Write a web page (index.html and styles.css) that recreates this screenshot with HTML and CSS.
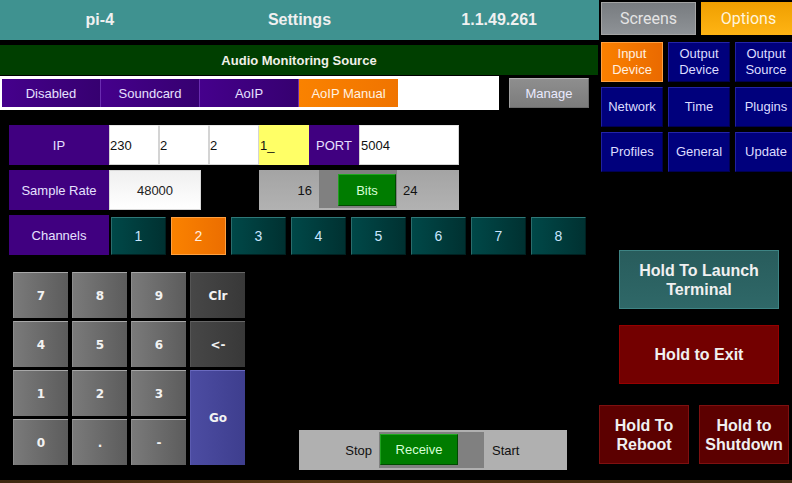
FILE: index.html
```html
<!DOCTYPE html>
<html>
<head>
<meta charset="utf-8">
<link rel="stylesheet" href="styles.css">
</head>
<body>
<div class="screen">
  <div class="left">
    <div class="header">
      <div>pi-4</div>
      <div>Settings</div>
      <div>1.1.49.261</div>
    </div>
    <div class="titlebar">Audio Monitoring Source</div>
    <div class="source-row">
      <div class="source-box">
        <div class="src">Disabled</div>
        <div class="src">Soundcard</div>
        <div class="src">AoIP</div>
        <div class="src src-on">AoIP Manual</div>
      </div>
      <div class="manage">Manage</div>
    </div>
    <div class="row row-ip">
      <div class="label">IP</div>
      <div class="field">230</div>
      <div class="field">2</div>
      <div class="field">2</div>
      <div class="field field-active">1_</div>
      <div class="label label-port">PORT</div>
      <div class="field field-port">5004</div>
    </div>
    <div class="row">
      <div class="label">Sample Rate</div>
      <div class="rate">48000</div>
      <div class="toggle bits">
        <div class="tg-left">16</div>
        <div class="track"><div class="knob">Bits</div></div>
        <div class="tg-right">24</div>
      </div>
    </div>
    <div class="row">
      <div class="label">Channels</div>
      <div class="channels">
        <div class="ch">1</div>
        <div class="ch ch-on">2</div>
        <div class="ch">3</div>
        <div class="ch">4</div>
        <div class="ch">5</div>
        <div class="ch">6</div>
        <div class="ch">7</div>
        <div class="ch">8</div>
      </div>
    </div>
    <div class="bottom">
      <div class="keypad">
        <div class="key">7</div>
        <div class="key">8</div>
        <div class="key">9</div>
        <div class="key key-dark">Clr</div>
        <div class="key">4</div>
        <div class="key">5</div>
        <div class="key">6</div>
        <div class="key key-dark">&lt;-</div>
        <div class="key">1</div>
        <div class="key">2</div>
        <div class="key">3</div>
        <div class="key key-go">Go</div>
        <div class="key">0</div>
        <div class="key">.</div>
        <div class="key">-</div>
      </div>
      <div class="toggle receive">
        <div class="tg-left">Stop</div>
        <div class="track"><div class="knob">Receive</div></div>
        <div class="tg-right">Start</div>
      </div>
    </div>
  </div>
  <div class="right">
    <div class="tabs">
      <div class="tab tab-screens">Screens</div>
      <div class="tab tab-options">Options</div>
    </div>
    <div class="menu">
      <div class="mi mi-on">Input<br>Device</div>
      <div class="mi">Output<br>Device</div>
      <div class="mi">Output<br>Source</div>
      <div class="mi">Network</div>
      <div class="mi">Time</div>
      <div class="mi">Plugins</div>
      <div class="mi">Profiles</div>
      <div class="mi">General</div>
      <div class="mi">Update</div>
    </div>
    <div class="hold hold-term">Hold To Launch<br>Terminal</div>
    <div class="hold hold-exit">Hold to Exit</div>
    <div class="hold-row">
      <div class="hold hold-small">Hold To<br>Reboot</div>
      <div class="hold hold-small hold-shut">Hold to<br>Shutdown</div>
    </div>
  </div>
</div>
<div class="wood"></div>
</body>
</html>
```

FILE: styles.css
```css
* { box-sizing: border-box; }
html, body {
  margin: 0;
  padding: 0;
  background: #000;
  width: 792px;
  height: 483px;
  overflow: hidden;
  font-family: "Liberation Sans", Arial, sans-serif;
  font-size: 13px;
}
.screen {
  display: flex;
  height: 480px;
  overflow: hidden;
}
.left {
  width: 599px;
  display: flex;
  flex-direction: column;
}
.header {
  height: 40px;
  width: 599px;
  background: #3f9290;
  display: grid;
  grid-template-columns: 1fr 1fr 1fr;
  align-items: center;
  text-align: center;
  color: #f0f0f0;
  font-weight: bold;
  font-size: 16px;
}
.titlebar {
  margin-top: 5px;
  height: 30px;
  width: 598px;
  background: #003f00;
  color: #f0f0e8;
  font-weight: bold;
  font-size: 13px;
  display: flex;
  align-items: center;
  justify-content: center;
}
.source-row {
  margin-top: 1px;
  display: flex;
  height: 34px;
}
.source-box {
  width: 499px;
  height: 34px;
  background: #fff;
  padding: 3px 0 3px 2px;
  display: flex;
}
.src {
  width: 99px;
  height: 28px;
  background: linear-gradient(to right, #45008c, #360070);
  border-right: 1px solid #6a2cb0;
  color: #e6e0ff;
  display: flex;
  align-items: center;
  justify-content: center;
}
.src-on {
  background: linear-gradient(to right, #fa8200, #f07400);
  border-right: none;
  color: #fff2e0;
}
.manage {
  margin-left: 10px;
  margin-top: 2px;
  width: 80px;
  height: 30px;
  background: linear-gradient(to bottom, #8e8e8e, #7c7c7c);
  border: 1px solid #6a6a6a;
  border-top-color: #b0b0b0;
  border-left-color: #a0a0a0;
  color: #eaeaff;
  display: flex;
  align-items: center;
  justify-content: center;
}
.row {
  margin-top: 5px;
  margin-left: 9px;
  height: 40px;
  display: flex;
}
.row-ip { margin-top: 15px; }
.label {
  width: 100px;
  height: 40px;
  background: #400080;
  color: #e6e0ff;
  display: flex;
  align-items: center;
  justify-content: center;
}
.label-port { width: 50px; }
.field {
  width: 50px;
  height: 40px;
  background: #fff;
  border: 1px solid #d4d4d4;
  border-top-color: #e8e8e8;
  color: #111;
  display: flex;
  align-items: center;
  padding-left: 0;
}
.field-active {
  background: #ffff66;
  border-color: #ffff66;
}
.field-port {
  width: 100px;
  padding-left: 1px;
}
.rate {
  width: 92px;
  height: 40px;
  background: linear-gradient(to bottom, #f0f0f0, #ffffff);
  border: 1px solid #d8d8d8;
  color: #222;
  display: flex;
  align-items: center;
  justify-content: center;
}
.toggle {
  display: flex;
  color: #111;
}
.bits {
  margin-left: 58px;
  width: 200px;
  height: 40px;
  background: linear-gradient(to bottom, #a4a4a4, #b2b2b2);
}
.tg-left {
  display: flex;
  align-items: center;
  justify-content: flex-end;
  padding-right: 7px;
}
.tg-right {
  display: flex;
  align-items: center;
  padding-left: 6px;
}
.track {
  background: #808080;
}
.knob {
  background: #007c00;
  border: 1px solid #004a00;
  border-top-color: #20a820;
  border-left-color: #20a020;
  color: #d6ffd6;
  display: flex;
  align-items: center;
  justify-content: center;
}
.bits .tg-left { width: 60px; }
.bits .track {
  width: 78px;
  height: 38px;
}
.bits .knob {
  margin-left: 19px;
  margin-top: 4px;
  width: 58px;
  height: 32px;
}
.channels {
  margin-left: 2px;
  margin-top: 2px;
  display: flex;
  gap: 5px;
}
.ch {
  width: 55px;
  height: 38px;
  background: linear-gradient(to right, #004848, #003131);
  border: 1px solid #002020;
  border-top-color: #2f7878;
  border-left-color: #2a6c6c;
  color: #c8e6ff;
  font-size: 14px;
  display: flex;
  align-items: center;
  justify-content: center;
}
.ch-on {
  background: linear-gradient(to right, #fa8200, #ec6e00);
  border-color: #ffa040;
  color: #fff0e0;
}
.bottom {
  margin-top: 17px;
  display: flex;
  align-items: flex-start;
}
.keypad {
  margin-left: 13px;
  display: grid;
  grid-template-columns: repeat(4, 55px);
  grid-template-rows: repeat(4, 46px);
  column-gap: 4px;
  row-gap: 3px;
}
.key {
  background: linear-gradient(to right, #7a7a7a, #5c5c5c);
  border-top: 1px solid #a8a8a8;
  border-left: 1px solid #8c8c8c;
  color: #f2f2f2;
  font-family: "DejaVu Sans", sans-serif;
  font-weight: bold;
  font-size: 12px;
  display: flex;
  align-items: center;
  justify-content: center;
}
.key-dark {
  background: linear-gradient(to right, #474747, #383838);
  border-top-color: #666;
  border-left-color: #555;
}
.key-go {
  grid-column: 4;
  grid-row: 3 / span 2;
  background: linear-gradient(to right, #4c4ca2, #3e3e8e);
  border-top-color: #6a6ac0;
  border-left-color: #5a5ab0;
}
.receive {
  margin-left: 54px;
  margin-top: 158px;
  width: 268px;
  height: 40px;
  background: #b0b0b0;
}
.receive .tg-left { width: 80px; }
.receive .tg-right { padding-left: 8px; }
.receive .track {
  margin-top: 2px;
  width: 105px;
  height: 36px;
}
.receive .knob {
  margin-left: 1px;
  margin-top: 2px;
  width: 78px;
  height: 31px;
}
.right {
  width: 193px;
  overflow: hidden;
  display: flex;
  flex-direction: column;
}
.tabs {
  margin-top: 2px;
  margin-left: 2px;
  display: flex;
  gap: 5px;
  height: 33px;
}
.tab {
  width: 95px;
  flex: none;
  height: 33px;
  font-family: Roboto, "Liberation Sans", sans-serif;
  font-size: 16px;
  display: flex;
  align-items: center;
  justify-content: center;
}
.tab-screens {
  background: linear-gradient(to bottom, #787c80, #8e9296);
  border: 1px solid #a4a4a4;
  color: #e4e4e4;
}
.tab-options {
  background: linear-gradient(to bottom, #ef9f00, #ffb414);
  color: #fff4dc;
}
.menu {
  margin-top: 7px;
  margin-left: 2px;
  display: grid;
  grid-template-columns: repeat(3, 62px);
  grid-auto-rows: 40px;
  gap: 5px;
}
.mi {
  background: #00007c;
  border: 1px solid #000050;
  border-top-color: #2424a8;
  border-left-color: #2020a0;
  color: #dcdcff;
  line-height: 16px;
  text-align: center;
  display: flex;
  align-items: center;
  justify-content: center;
}
.mi-on {
  background: linear-gradient(to right, #fa8000, #ea6a00);
  border-color: #ffa040;
  color: #fff0e0;
}
.hold {
  width: 160px;
  height: 59px;
  margin-left: 20px;
  color: #f0f0f0;
  font-weight: bold;
  font-size: 16px;
  line-height: 19px;
  text-align: center;
  display: flex;
  align-items: center;
  justify-content: center;
}
.hold-term {
  margin-top: 78px;
  background: linear-gradient(to bottom, #285c5c, #2f6868);
  border: 1px solid #3e8484;
}
.hold-exit {
  margin-top: 16px;
  background: #730000;
  border: 1px solid #960000;
}
.hold-row {
  margin-top: 21px;
  display: flex;
}
.hold-small {
  width: 90px;
  margin-left: 0;
  background: #5c0000;
  border: 1px solid #7e1010;
}
.hold-shut { margin-left: 10px; }
.wood {
  height: 3px;
  background: linear-gradient(to right, #3e2810, #5a3a16 40%, #4a3012 70%, #3e2a12);
}
```
